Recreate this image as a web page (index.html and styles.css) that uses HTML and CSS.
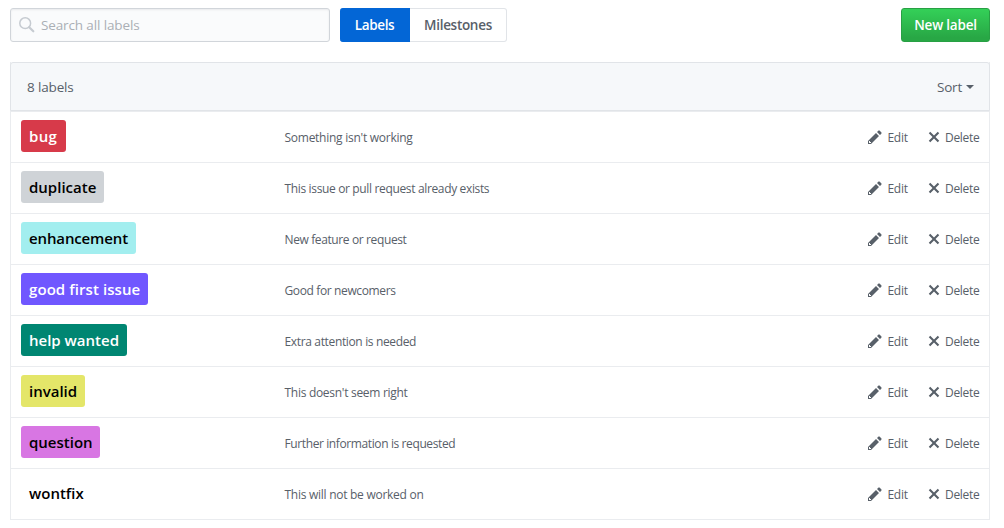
FILE: index.html
```
<!DOCTYPE html>
<html lang="en">
<head>
<meta charset="utf-8">
<title>Labels</title>
<link rel="stylesheet" href="styles.css">
</head>
<body>
<svg class="sprite" aria-hidden="true">
<symbol id="pencil" viewBox="0 0 14 16"><path fill-rule="evenodd" d="M0 12v3h3l8-8-3-3-8 8zm3 2H1v-2h1v1h1v1zm10.3-9.3L12 6 9 3l1.3-1.3a.996.996 0 0 1 1.41 0l1.59 1.59c.39.39.39 1.02 0 1.41z"/></symbol>
<symbol id="x" viewBox="0 0 12 16"><path d="M7.48 8l3.75 3.75-1.48 1.48L6 9.48l-3.75 3.75-1.48-1.48L4.52 8 .77 4.25l1.48-1.48L6 6.52l3.75-3.75 1.48 1.48z"/></symbol>
</svg>
<div class="toolbar">
<label class="search">
<svg class="search-icon" viewBox="0 0 16 16"><circle cx="6.2" cy="6.2" r="5.4"/><path d="M10.2 10.2l4.1 4.1"/></svg>
<input type="text" placeholder="Search all labels">
</label>
<nav class="tabs"><a class="tab selected"><span class="t-labels">Labels</span></a><a class="tab"><span class="t-miles">Milestones</span></a></nav>
<button class="new-label"><span>New label</span></button>
</div>
<div class="box">
<div class="box-header"><span class="count">8 labels</span><span class="sort">Sort<i class="caret"></i></span></div>
<div class="row"><div class="name"><span class="pill bug">bug</span></div><div class="desc d1">Something isn't working</div><a class="edit"><svg class="pencil"><use href="#pencil"/></svg>Edit</a><a class="delete"><svg class="cross"><use href="#x"/></svg>Delete</a></div>
<div class="row"><div class="name"><span class="pill duplicate">duplicate</span></div><div class="desc d2">This issue or pull request already exists</div><a class="edit"><svg class="pencil"><use href="#pencil"/></svg>Edit</a><a class="delete"><svg class="cross"><use href="#x"/></svg>Delete</a></div>
<div class="row"><div class="name"><span class="pill enhancement">enhancement</span></div><div class="desc d3">New feature or request</div><a class="edit"><svg class="pencil"><use href="#pencil"/></svg>Edit</a><a class="delete"><svg class="cross"><use href="#x"/></svg>Delete</a></div>
<div class="row"><div class="name"><span class="pill first">good first issue</span></div><div class="desc d4">Good for newcomers</div><a class="edit"><svg class="pencil"><use href="#pencil"/></svg>Edit</a><a class="delete"><svg class="cross"><use href="#x"/></svg>Delete</a></div>
<div class="row"><div class="name"><span class="pill help">help wanted</span></div><div class="desc d5">Extra attention is needed</div><a class="edit"><svg class="pencil"><use href="#pencil"/></svg>Edit</a><a class="delete"><svg class="cross"><use href="#x"/></svg>Delete</a></div>
<div class="row"><div class="name"><span class="pill invalid">invalid</span></div><div class="desc d6">This doesn't seem right</div><a class="edit"><svg class="pencil"><use href="#pencil"/></svg>Edit</a><a class="delete"><svg class="cross"><use href="#x"/></svg>Delete</a></div>
<div class="row"><div class="name"><span class="pill question">question</span></div><div class="desc d7">Further information is requested</div><a class="edit"><svg class="pencil"><use href="#pencil"/></svg>Edit</a><a class="delete"><svg class="cross"><use href="#x"/></svg>Delete</a></div>
<div class="row"><div class="name"><span class="pill wontfix">wontfix</span></div><div class="desc d8">This will not be worked on</div><a class="edit"><svg class="pencil"><use href="#pencil"/></svg>Edit</a><a class="delete"><svg class="cross"><use href="#x"/></svg>Delete</a></div>
</div>
</body>
</html>
```
FILE: styles.css
```
* { box-sizing: border-box; }
body { margin: 0; padding: 8px 14px 0 10px; background: #fff; color: #586069; font-family: "Open Sans", "Noto Sans", sans-serif; font-size: 13.5px; line-height: 20px; white-space: nowrap; }
.sprite { display: none; }
.toolbar { display: flex; height: 34px; margin-bottom: 20px; }
.search { display: flex; align-items: center; width: 320px; border: 1px solid #d1d5da; border-radius: 3px; background: #fafbfc; box-shadow: inset 0 1px 2px rgba(27,31,35,.075); padding-left: 8px; }
.search-icon { width: 16px; height: 16px; fill: none; stroke: #c6cbd1; stroke-width: 1.5; }
.search-icon path { stroke-width: 2.2; stroke-linecap: round; }
.search input { flex: 1; min-width: 0; border: 0; padding: 0; margin-left: 6px; background: transparent; outline: 0; font: inherit; letter-spacing: -.13px; }
.search input::placeholder { color: #aaafb5; opacity: 1; }
.tabs { display: flex; margin-left: 10px; font-weight: 600; }
.tab { width: 97px; display: flex; align-items: center; justify-content: center; border: 1px solid #e1e4e8; border-left: 0; border-radius: 0 3px 3px 0; }
.tab.selected { width: 70px; color: #fff; background: #0366d6; border-color: #0366d6; border-radius: 3px 0 0 3px; }
.t-labels { letter-spacing: -.35px; }
.t-miles { letter-spacing: -.3px; }
.new-label { width: 89px; margin-left: auto; padding: 0; color: #fff; font: 600 13.5px/20px "Open Sans", sans-serif; letter-spacing: -.2px; border: 1px solid #28a044; border-radius: 3px; background: linear-gradient(#34d058, #28a745 90%); }
.box { border: 1px solid #eaecef; border-top: 0; }
.box-header { height: 49px; margin: 0 -1px; padding: 0 15px 0 16px; display: flex; align-items: center; justify-content: space-between; border: 1px solid #e1e4e8; border-radius: 3px 3px 0 0; background: #f6f8fa; }
.count { letter-spacing: -.15px; }
.sort { display: flex; align-items: center; letter-spacing: -.2px; }
.caret { margin-left: 4px; border: 4px solid transparent; border-top-color: #586069; border-bottom: 0; }
.row { display: flex; align-items: center; height: 51px; padding: 0 10px; border-top: 1px solid #eaecef; font-size: 12px; }
.name { width: 263.5px; display: flex; padding-bottom: 2px; }
.pill { height: 32px; padding: 0 8px; border-radius: 3px; color: #000; font-size: 15px; font-weight: 550; line-height: 32px; }
.desc { flex: 1; padding-top: 1px; }
.edit, .delete { display: flex; align-items: center; padding-top: 1px; letter-spacing: -.3px; }
.edit { width: 60px; }
.delete { width: 51px; }
.pencil, .cross { height: 16px; fill: #586069; flex: none; margin-top: -1px; }
.pencil { width: 14px; margin-right: 5.5px; }
.cross { width: 12px; margin-right: 5px; }
.bug { width: 45px; background: #d73a4a; color: #fff; }
.bug, .first, .help { font-weight: 600; }
.duplicate { width: 83px; background: #cfd3d7; }
.enhancement { width: 115px; background: #a2eeef; letter-spacing: -.13px; }
.first { width: 127px; background: #7057ff; color: #fff; letter-spacing: .08px; }
.help { width: 106px; background: #008672; color: #fff; }
.invalid { width: 64px; background: #e4e669; }
.question { width: 79px; background: #d876e3; }
.wontfix { background: #fff; }
.bug { letter-spacing: .3px; }
.d1 { letter-spacing: -.26px; }
.d2 { letter-spacing: -.35px; }
.d3 { letter-spacing: -.38px; }
.d4 { letter-spacing: -.37px; }
.d5 { letter-spacing: -.35px; }
.d6 { letter-spacing: -.29px; }
.d7 { letter-spacing: -.39px; }
.d8 { letter-spacing: -.27px; }
```
